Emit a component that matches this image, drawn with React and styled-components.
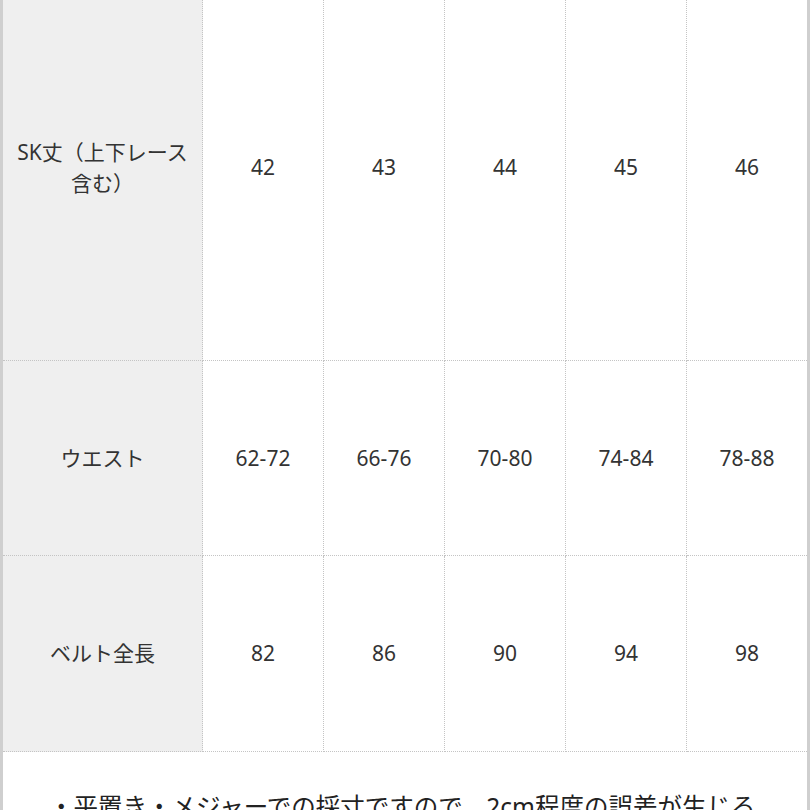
import React from "react";
import styled, { createGlobalStyle } from "styled-components";

const GlobalStyle = createGlobalStyle`
  html, body {
    margin: 0;
    padding: 0;
    background: #fff;
    overflow: hidden;
  }
  body {
    font-family: "Noto Sans", "Noto Sans CJK JP", sans-serif;
    color: #333;
  }
`;

const Frame = styled.div`
  width: 810px;
  box-sizing: border-box;
  border-left: 3px solid #cfcfcf;
  border-right: 3px solid #cfcfcf;
  margin-top: -25px;
`;

const Table = styled.div`
  display: grid;
  grid-template-columns: 200px repeat(4, 121px) 120px;
`;

const Cell = styled.div`
  display: flex;
  align-items: center;
  justify-content: center;
  text-align: center;
  box-sizing: border-box;
  height: ${(p) => p.$h}px;
  padding: 0 8px;
  font-size: 21px;
  line-height: 31px;
  background: ${(p) => (p.$head ? "#efefef" : "#fff")};
  border-right: ${(p) => (p.$last ? "none" : "1px dotted #c4c4c4")};
  border-bottom: 1px dotted #c4c4c4;
`;

const Note = styled.div`
  padding: 37px 30px 20px 46px;
  font-size: 24.5px;
  line-height: 36px;
  text-align: left;
  color: #222;
`;

const rows = [
  { label: <>SK丈（上下レース<br />含む）</>, values: ["42", "43", "44", "45", "46"], h: 386 },
  { label: "ウエスト", values: ["62-72", "66-76", "70-80", "74-84", "78-88"], h: 195 },
  { label: "ベルト全長", values: ["82", "86", "90", "94", "98"], h: 196 },
];

const App = () => {
  return (
    <>
      <GlobalStyle />
      <Frame>
        <Table>
          {rows.map((row, i) => (
            <React.Fragment key={i}>
              <Cell $head $h={row.h}>{row.label}</Cell>
              {row.values.map((v, j) => (
                <Cell key={j} $h={row.h} $last={j === row.values.length - 1}>
                  {v}
                </Cell>
              ))}
            </React.Fragment>
          ))}
        </Table>
        <Note>
          ・平置き・メジャーでの採寸ですので、2cm程度の誤差が生じる
          <br />
          場合がございます。
        </Note>
      </Frame>
    </>
  );
};

export default App;
